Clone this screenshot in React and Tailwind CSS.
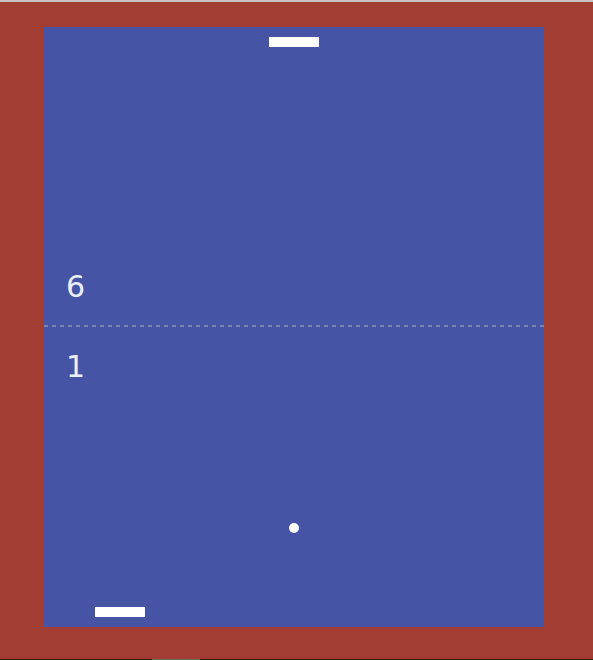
import React from 'react';

export default function App() {
  return (
    <div className="w-[593px] h-[660px] overflow-hidden flex flex-col bg-[#a13d33]">
      <div className="h-[2px] bg-[#c9c4c3]" />
      <div className="flex-1 pl-[44px] pt-[25px]">
        <div className="relative w-[500px] h-[600px] bg-[#4554a4]">
          {/* paddles */}
          <div className="absolute left-[225px] top-[10px] w-[50px] h-[10px] bg-white" />
          <div className="absolute left-[51px] top-[580px] w-[50px] h-[10px] bg-white" />
          {/* net */}
          <div className="absolute left-0 top-[298px] w-full h-[2px] bg-[repeating-linear-gradient(90deg,#7e84ae_0px,#7e84ae_4px,transparent_4px,transparent_8px)]" />
          {/* ball */}
          <div className="absolute left-[245px] top-[496px] w-[10px] h-[10px] rounded-full bg-white" />
          {/* scores */}
          <div className="absolute left-[22px] top-[242px] text-[30px] leading-[36px] text-[#eceef6] font-['DejaVu_Sans',sans-serif]">6</div>
          <div className="absolute left-[22px] top-[322px] text-[30px] leading-[36px] text-[#eceef6] font-['DejaVu_Sans',sans-serif]">1</div>
        </div>
      </div>
      <div className="h-[1px] bg-[#2a1a18] relative">
        <div className="absolute left-[152px] w-[48px] h-[1px] bg-[#6a6a6a]" />
      </div>
    </div>
  );
}
